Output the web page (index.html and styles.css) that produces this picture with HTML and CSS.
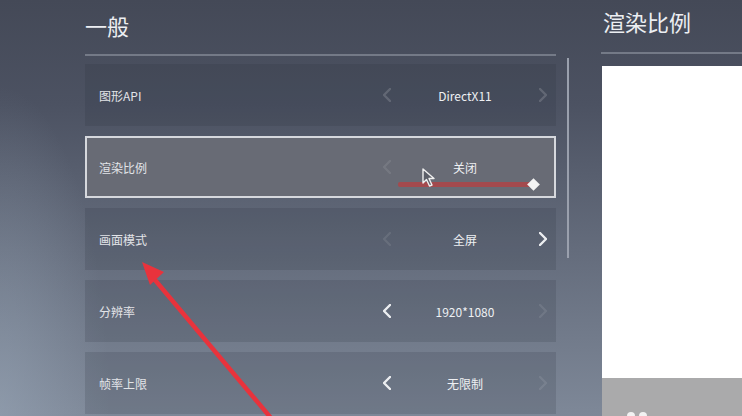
FILE: index.html
```html
<!DOCTYPE html>
<html lang="zh">
<head>
<meta charset="utf-8">
<title>设置</title>
<link rel="stylesheet" href="styles.css">
</head>
<body>
<div class="page">
  <section class="general">
    <h1 class="title">一般</h1>
    <div class="list">
      <div class="row">
        <span class="label">图形API</span>
        <div class="control">
          <svg class="chev dim" viewBox="0 0 8 14"><polyline points="7,1 1,7 7,13"/></svg>
          <span class="value">DirectX11</span>
          <svg class="chev dim" viewBox="0 0 8 14"><polyline points="1,1 7,7 1,13"/></svg>
        </div>
      </div>
      <div class="row active">
        <span class="label">渲染比例</span>
        <div class="control">
          <svg class="chev faint" viewBox="0 0 8 14"><polyline points="7,1 1,7 7,13"/></svg>
          <span class="value">关闭</span>
          <span class="chev-space"></span>
        </div>
        <div class="slider"><span class="track"></span><span class="knob"></span></div>
        <svg class="cursor" viewBox="0 0 14 20"><path d="M1 1 L1 15 L4.5 11.5 L7.5 18 L10 17 L7 10.5 L12 10.5 Z"/></svg>
      </div>
      <div class="row">
        <span class="label">画面模式</span>
        <div class="control">
          <svg class="chev faint" viewBox="0 0 8 14"><polyline points="7,1 1,7 7,13"/></svg>
          <span class="value">全屏</span>
          <svg class="chev" viewBox="0 0 8 14"><polyline points="1,1 7,7 1,13"/></svg>
        </div>
      </div>
      <div class="row">
        <span class="label">分辨率</span>
        <div class="control">
          <svg class="chev" viewBox="0 0 8 14"><polyline points="7,1 1,7 7,13"/></svg>
          <span class="value">1920*1080</span>
          <svg class="chev faint" viewBox="0 0 8 14"><polyline points="1,1 7,7 1,13"/></svg>
        </div>
      </div>
      <div class="row">
        <span class="label">帧率上限</span>
        <div class="control">
          <svg class="chev" viewBox="0 0 8 14"><polyline points="7,1 1,7 7,13"/></svg>
          <span class="value">无限制</span>
          <svg class="chev faint" viewBox="0 0 8 14"><polyline points="1,1 7,7 1,13"/></svg>
        </div>
      </div>
    </div>
  </section>
  <div class="scrollbar"></div>
  <section class="preview">
    <h2 class="ptitle">渲染比例</h2>
    <div class="pic"></div>
    <div class="pic-bar"><span class="dot"></span><span class="dot"></span></div>
  </section>
  <svg class="annot" viewBox="0 0 742 416"><line x1="155" y1="280" x2="276" y2="424"/><polygon points="142,262 164,272 150,285"/></svg>
</div>
</body>
</html>
```
FILE: styles.css
```css
* { box-sizing: border-box; }
html, body { margin: 0; padding: 0; }
body {
  width: 742px;
  height: 416px;
  overflow: hidden;
  font-family: "Noto Sans CJK SC", "Noto Sans", "Liberation Sans", sans-serif;
  color: #e6e8ec;
}
.page {
  position: relative;
  width: 742px;
  height: 416px;
  display: flex;
  background:
    radial-gradient(ellipse 110px 330px at 0 100%, rgba(160,175,192,0.45), rgba(160,175,192,0)),
    linear-gradient(to bottom, #444957 0%, #4c5262 25%, #646c7c 60%, #7e8898 100%);
}
.general {
  margin-left: 85px;
  width: 471px;
  display: flex;
  flex-direction: column;
}
.title {
  margin: 0;
  height: 56px;
  padding-top: 10px;
  font-size: 22px;
  line-height: 30px;
  font-weight: 400;
  color: #eceef2;
  border-bottom: 2px solid rgba(200,205,215,0.35);
}
.list {
  display: flex;
  flex-direction: column;
  gap: 10px;
  padding-top: 8px;
}
.row {
  position: relative;
  height: 62px;
  display: flex;
  align-items: center;
  padding-left: 14px;
  padding-right: 6px;
  background: rgba(40,45,58,0.16);
}
.row.active {
  background: #686b75;
  border: 2px solid #d6d8dd;
  padding-left: 12px;
  padding-right: 4px;
}
.label {
  flex: 1;
  font-size: 12px;
  color: #e2e4e8;
}
.control {
  width: 170px;
  display: grid;
  grid-template-columns: 14px 1fr 14px;
  align-items: center;
  justify-items: center;
}
.value {
  font-size: 12px;
  color: #eef0f3;
}
.chev {
  width: 8px;
  height: 14px;
  fill: none;
  stroke: #eceef1;
  stroke-width: 2.4;
  stroke-linecap: round;
  stroke-linejoin: round;
}
.chev.dim { stroke: rgba(255,255,255,0.16); }
.chev.faint { stroke: rgba(255,255,255,0.09); }
.slider {
  position: absolute;
  left: 311px;
  top: 41px;
  width: 140px;
  height: 10px;
  display: flex;
  align-items: center;
}
.track {
  flex: 1;
  height: 5px;
  background: #a34a4e;
  border-radius: 2px;
}
.knob {
  width: 9px;
  height: 9px;
  background: #f4f4f4;
  transform: rotate(45deg);
  margin-left: -2px;
}
.cursor {
  position: absolute;
  left: 335px;
  top: 30px;
  width: 14px;
  height: 20px;
  fill: #5c5f69;
  stroke: #f0f0f0;
  stroke-width: 1.4;
  stroke-linejoin: round;
}
.scrollbar {
  margin-left: 11px;
  margin-top: 58px;
  width: 2px;
  height: 200px;
  background: #9aa0ad;
}
.preview {
  margin-left: 32px;
  flex: 1;
  display: flex;
  flex-direction: column;
}
.ptitle {
  margin: 0;
  height: 54px;
  padding-top: 6px;
  padding-left: 2px;
  font-size: 22px;
  line-height: 30px;
  font-weight: 400;
  color: #eceef2;
  border-bottom: 2px solid rgba(200,205,215,0.35);
}
.pic {
  margin-top: 12px;
  margin-left: 1px;
  height: 312px;
  background: #ffffff;
}
.pic-bar {
  margin-left: 1px;
  flex: 1;
  background: #aaaaab;
  display: flex;
  align-items: flex-end;
  gap: 4px;
  padding-left: 25px;
}
.dot {
  width: 8px;
  height: 8px;
  border-radius: 50%;
  background: #f2f2f2;
  margin-bottom: -4px;
}
.annot {
  position: absolute;
  left: 0;
  top: 0;
  width: 742px;
  height: 416px;
  pointer-events: none;
}
.annot line {
  stroke: #e8333c;
  stroke-width: 4.5;
}
.annot polygon {
  fill: #e8333c;
}
```
